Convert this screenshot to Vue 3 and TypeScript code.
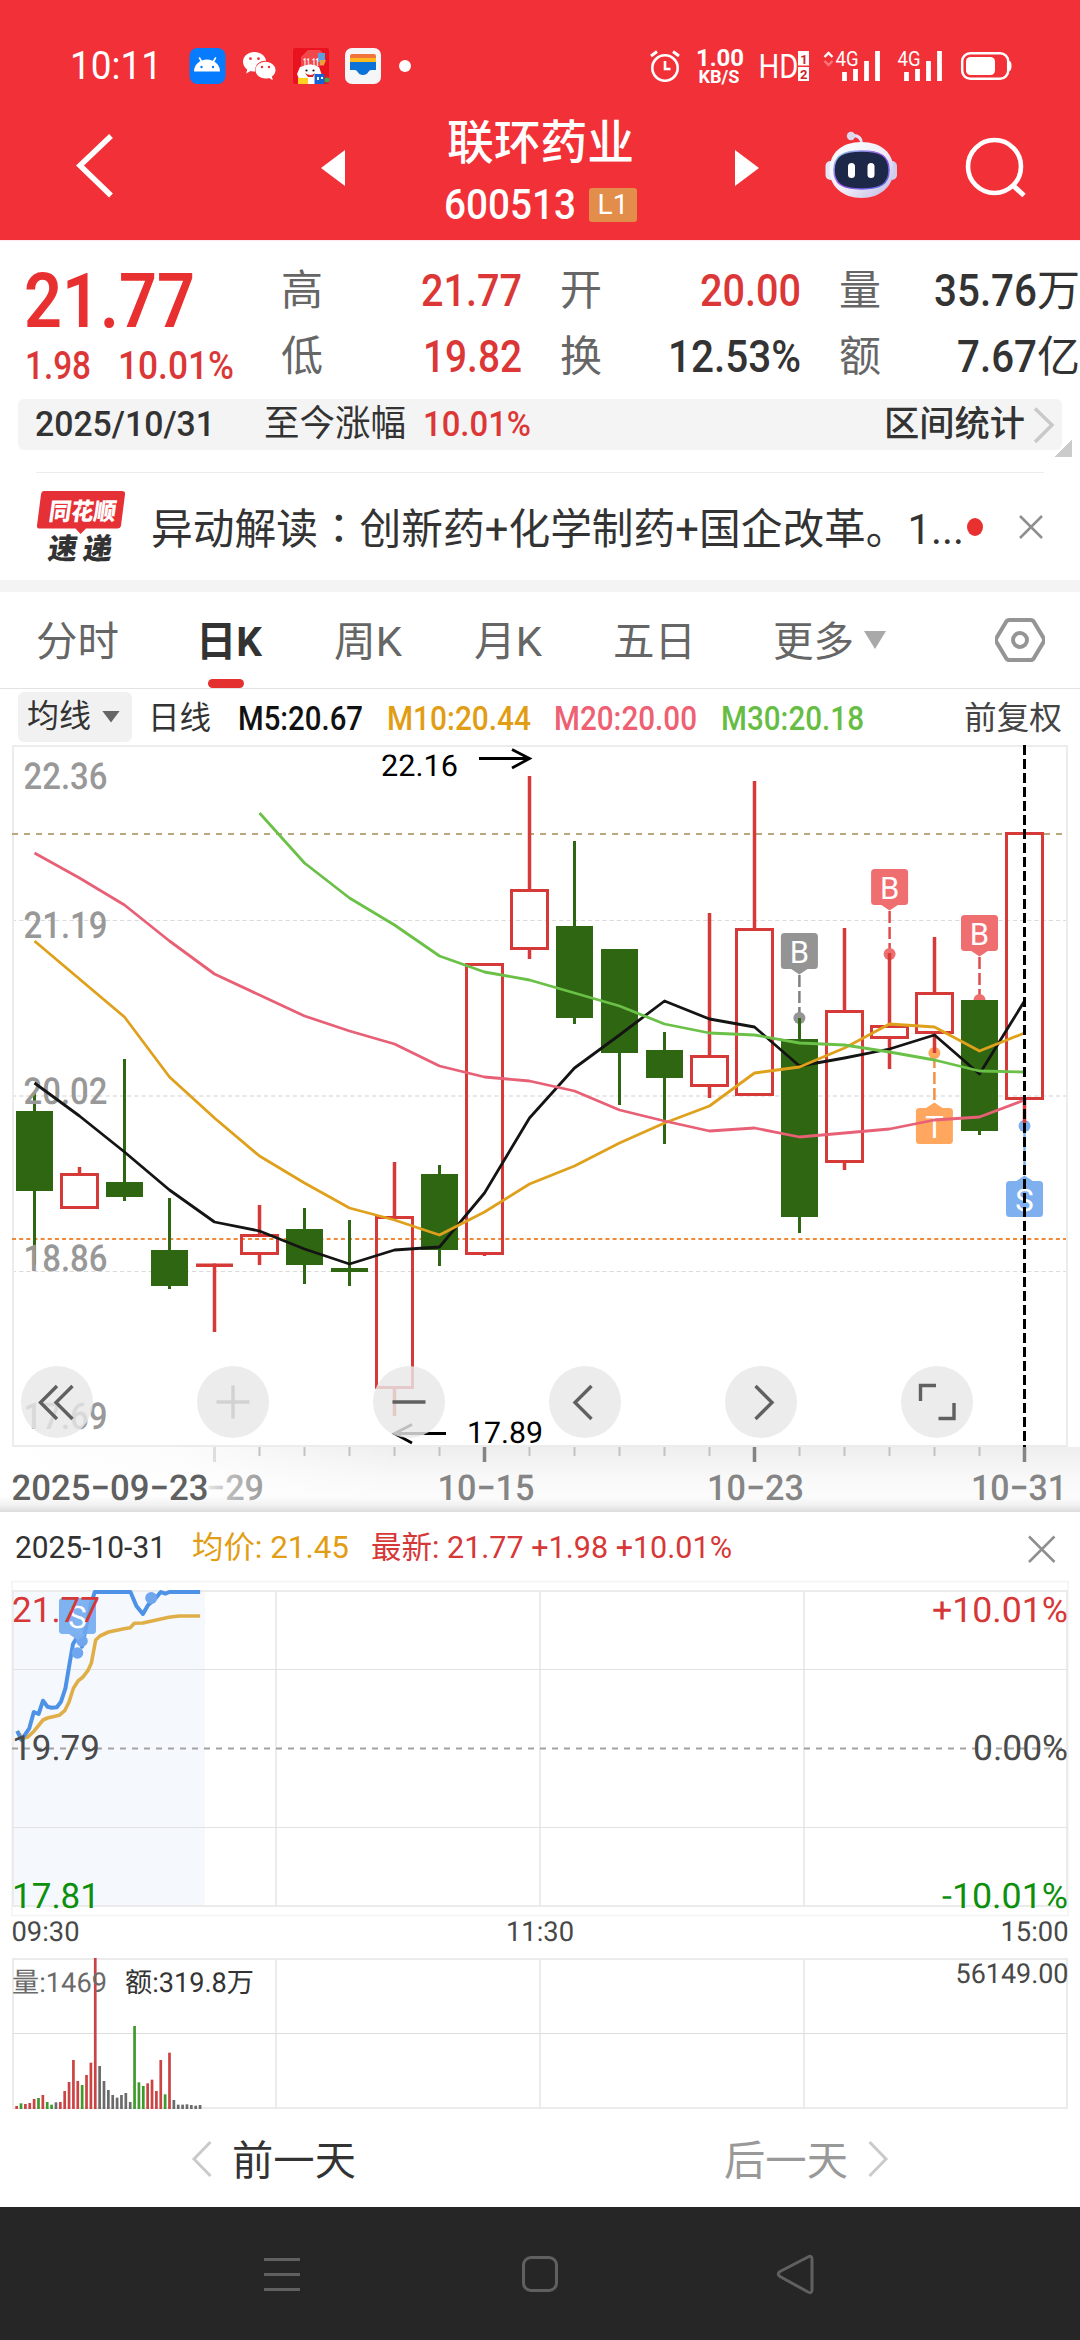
<script setup lang="ts">
import { computed } from 'vue'

type Fitted = HTMLElement

// Condenses or widens a run of text horizontally to a given width in px.
const vFit = {
  mounted(el: Fitted, binding: { value: number }) {
    el.style.display = 'inline-block'
    el.style.whiteSpace = 'pre'
    const natural = el.getBoundingClientRect().width
    el.style.transformOrigin = '0 50%'
    el.style.transform = `scaleX(${binding.value / natural})`
    el.style.marginRight = `${binding.value - natural}px`
  },
}

interface Stat { label: string; value: string; w: number; unit?: string; up?: boolean }
const stats: Stat[][] = [
  [
    { label: '高', value: '21.77', w: 101, up: true },
    { label: '低', value: '19.82', w: 99, up: true },
  ],
  [
    { label: '开', value: '20.00', w: 101, up: true },
    { label: '换', value: '12.53%', w: 133 },
  ],
  [
    { label: '量', value: '35.76', w: 103, unit: '万' },
    { label: '额', value: '7.67', w: 80, unit: '亿' },
  ],
]

const averages = [
  { text: 'M5:20.67', w: 125, left: 27, color: '#111111' },
  { text: 'M10:20.44', w: 144, left: 24, color: '#e19d13' },
  { text: 'M20:20.00', w: 143, left: 23, color: '#ee6072' },
  { text: 'M30:20.18', w: 143, left: 24, color: '#66bd43' },
]

// Each entry: rising flag, body top, body bottom, wick top, wick bottom.
type Candle = [number, number, number, number, number]
const raw: Candle[] = [
  [0, 1111, 1191, 1093, 1265],
  [1, 1173, 1209, 1167, 1209],
  [0, 1182, 1197, 1059, 1201],
  [0, 1250, 1286, 1198, 1289],
  [1, 1263.5, 1266.5, 1265, 1332],
  [1, 1234, 1255, 1205, 1265],
  [0, 1229, 1265, 1208, 1284],
  [0, 1268, 1272, 1220, 1286],
  [1, 1216, 1389, 1162, 1416],
  [0, 1174, 1250, 1165, 1266],
  [1, 963, 1255, 963, 1256],
  [1, 889, 950, 776, 959],
  [0, 926, 1018, 841, 1024],
  [0, 949, 1053, 949, 1105],
  [0, 1050, 1078, 1032, 1144],
  [1, 1055, 1087, 913, 1098],
  [1, 928, 1096, 781, 1096],
  [0, 1039, 1217, 1018, 1233],
  [1, 1010, 1163, 928, 1170],
  [1, 1025, 1039, 953, 1069],
  [1, 992, 1034, 937, 1053],
  [0, 1000, 1131, 1000, 1135],
  [1, 832, 1100, 832, 1123],
]
const cx = (i: number) => 34.5 + 45 * i
const candles = raw.map(([up, top, bottom, high, low], i) => ({
  x: cx(i), up: up === 1, top, bottom, high, low, flat: bottom - top < 6,
}))

const line = (ys: number[], start = 0) => ys.map((y, i) => `${cx(i + start)},${y}`).join(' ')
const maLines = computed(() => [
  { color: '#141414', points: line([1083, 1116, 1152, 1190, 1222, 1231, 1249, 1264, 1250, 1247, 1193, 1118, 1068, 1035, 1001, 1019, 1027, 1066, 1058, 1049, 1035, 1074, 1001]) },
  { color: '#dfa01c', points: line([941, 979, 1017, 1077, 1118, 1156, 1183, 1208, 1220, 1235, 1212, 1184, 1166, 1143, 1123, 1106, 1073, 1067, 1048, 1024, 1027, 1051, 1033]) },
  { color: '#e86076', points: line([853, 878, 905, 941, 974, 995, 1016, 1031, 1044, 1066, 1077, 1081, 1091, 1110, 1121, 1131, 1128, 1137, 1133, 1129, 1120, 1117, 1100]) },
  { color: '#6bc048', points: line([813, 863, 898, 925, 956, 972, 980, 993, 1006, 1024, 1033, 1035, 1043, 1045, 1052, 1060, 1071, 1072], 5) },
])

const scale = [
  { text: '22.36', y: 788.5 },
  { text: '21.19', y: 938 },
  { text: '20.02', y: 1104 },
  { text: '18.86', y: 1271 },
  { text: '17.69', y: 1429 },
]

const marks = [
  { t: 'B', x: 799.4, box: 933, dot: 1018, color: '#949494', dash: '#808080' },
  { t: 'B', x: 889.6, box: 869, dot: 954, color: '#ef6e6f', dash: '#e04a4c' },
  { t: 'B', x: 979.5, box: 915, dot: 1000, color: '#ef6e6f', dash: '#e04a4c' },
  { t: 'T', x: 934.4, box: 1108, dot: 1053, color: '#ffa65f', dash: '#f09246', below: true },
  { t: 'S', x: 1024.5, box: 1181, dot: 1126, color: '#7eb0f0', dash: '#7eb0f0', below: true },
]

const ticks = Array.from({ length: 18 }, (_, k) => k + 5).filter((i) => (i - 4) % 6 !== 0)

const hs = 540 / 1568
const curve = (pts: number[][]) => pts.map(([x, y]) => `${(x * hs).toFixed(1)},${(1510 + y / 3).toFixed(1)}`).join(' ')
const price = curve([[50, 663], [62, 690], [85, 655], [98, 606], [112, 612], [125, 572], [138, 590], [150, 593], [165, 592], [177, 575], [190, 535], [202, 460], [212, 402], [222, 385], [232, 382], [238, 410], [252, 340], [265, 280], [275, 246], [379, 246], [396, 288], [415, 312], [430, 285], [450, 267], [467, 246], [480, 251], [492, 246], [581, 246]])
const average = curve([[50, 663], [65, 685], [80, 682], [100, 662], [125, 630], [138, 624], [172, 616], [188, 602], [200, 577], [213, 535], [227, 512], [240, 502], [255, 482], [265, 460], [278, 390], [290, 378], [315, 366], [360, 356], [378, 353], [390, 340], [415, 339], [490, 322], [520, 318], [581, 318]])

const tones: Record<string, string> = { r: '#cb4343', g: '#3f9a2d', k: '#6b6b6b' }
const volumes = 'r498 g490 r492 r489 r477 g474 r465 g486 g494 k487 r486 r453 r426 r360 r423 g435 r405 r368 r54 k378 k423 k450 k465 k473 k465 k459 k486 g258 g427 g438 r430 r419 r453 r360 g463 r338 k480 k494 k494 k493 k495 k497 k495'
  .split(' ')
  .map((s, i) => ({ x: 15.3 + i * 4.367, y: 1940 + Number(s.slice(1)) / 3, color: tones[s[0]] }))
</script>

<template>
  <div class="screen">
    <header class="top">
      <div class="status">
        <span class="clock"><span v-fit="92">10:11</span></span>
        <svg class="tray" width="230" height="44" viewBox="186 44 230 44">
          <rect x="189.500" y="48" width="36" height="36" rx="8" fill="#067bfd" />
          <path d="M194 71.500a13 12 0 0 1 26 0z" fill="#fff" />
          <path d="M199.500 58l3 5M215.500 58l-3 5" stroke="#fff" stroke-width="1.600" stroke-linecap="round" />
          <circle cx="201.500" cy="67" r="1.200" fill="#067bfd" /><circle cx="213" cy="67" r="1.200" fill="#067bfd" />
          <path d="M254.500 52c-6.500 0-11.500 4.300-11.500 9.800 0 3.200 1.600 5.800 4.200 7.700l-1 4 4.400-2.400c1.500.4 2.700.5 4.500.5a9.500 9.500 0 0 1 11-10.600c-.8-5.300-5.600-9-11.600-9z" fill="#fff" />
          <path d="M265.500 61.800c-5.600 0-10 3.700-10 8.300s4.400 8.400 10 8.400c1.300 0 2.500-.3 3.600-.6l3.700 2.300-.9-3.600c2.200-1.600 3.600-3.800 3.600-6.500 0-4.600-4.500-8.300-10-8.300z" fill="#fff" />
          <g fill="#f23037"><circle cx="250.500" cy="58.700" r="1.400" /><circle cx="258.500" cy="58.700" r="1.400" /><circle cx="262" cy="67" r="1.200" /><circle cx="269" cy="67" r="1.200" /></g>
          <rect x="293" y="48" width="36" height="36" rx="2" fill="#e8131f" />
          <path d="M301 57l7-7 12 0 4 4v12h-23z" fill="#f2474b" />
          <path d="M318 53h7v9h-7z" fill="#5a9fe0" /><path d="M320 60h6l-2 5h-4z" fill="#e9a13c" />
          <path d="M300 67q11-5 19 0l4 11-3 6h-19l-4-10z" fill="#fff" />
          <path d="M305 73q6 4 10 0l-2 4h-5z" fill="#d3222c" />
          <circle cx="306.500" cy="70.500" r="1.100" fill="#111" /><circle cx="313.500" cy="70.500" r="1.100" fill="#111" />
          <path d="M298 78h10v6h-10z" fill="#ffd21f" /><path d="M314.500 74h10v10h-10z" fill="#1763d3" /><path d="M317 77h2v3h-2zM321 77h2v2h-2z" fill="#fff" /><circle cx="327" cy="80" r="2.500" fill="#35a853" />
          <text x="303" y="66" class="rb tiny" textLength="16" lengthAdjust="spacingAndGlyphs">11.11</text>
          <rect x="345" y="48" width="36" height="36" rx="7" fill="#f5f6f8" />
          <path d="M350 58v-2q0-2 2-2h22q2 0 2 2v2z" fill="#f2743c" />
          <path d="M350 58h26v4h-26z" fill="#fbb91e" />
          <path d="M350 62h26v8h-5q-1.500 0-2.500 1.700-2 3.300-5.500 3.300t-5.500-3.300q-1-1.700-2.500-1.700h-5z" fill="#0b72d8" />
          <circle cx="405" cy="66" r="6" fill="#fff" />
        </svg>
        <svg class="signals" width="372" height="44" viewBox="644 44 372 44">
          <g fill="none" stroke="#fff" stroke-width="2.600">
            <circle cx="665" cy="68" r="12.700" /><path d="M665 61v8h5.500" /><path d="M651 56l6-4.500M679 56l-6-4.500" stroke-width="3" />
          </g>
          <text x="696" y="66" class="rb" font-size="24" textLength="48">1.00</text>
          <text x="698.500" y="83" class="rb" font-size="18.500" textLength="41" lengthAdjust="spacingAndGlyphs">KB/S</text>
          <text x="758.500" y="78" class="rr" font-size="33.500" textLength="40" lengthAdjust="spacingAndGlyphs">HD</text>
          <rect x="798" y="51" width="11" height="14.500" fill="#fff" /><rect x="798" y="67" width="11" height="14" fill="#fff" />
          <text x="800.200" y="63.500" class="chip">1</text><text x="800" y="79" class="chip">2</text>
          <path d="M824.500 57l4-4 4 4" fill="none" stroke="#fff" stroke-width="2.400" /><path d="M824.500 61l4 4 4-4" fill="none" stroke="#f8777b" stroke-width="2.400" />
          <g fill="#fff" class="rr" font-size="21">
            <text x="835.500" y="66" textLength="23" lengthAdjust="spacingAndGlyphs">4G</text>
            <text x="897.500" y="66" textLength="23" lengthAdjust="spacingAndGlyphs">4G</text>
          </g>
          <path d="M844.500 72v9M855.500 69v12M866.500 61v20M877.500 51v30M906.500 72v9M917.500 69v12M928.500 61v20M939.500 51v30" stroke="#fff" stroke-width="4.800" />
          <rect x="962.200" y="53.200" width="46" height="25.600" rx="8" fill="none" stroke="#fff" stroke-width="2.500" />
          <rect x="966" y="57" width="29" height="18" rx="4.500" fill="#fff" /><path d="M1009 61q2.500 0 2.500 5t-2.500 5z" fill="#fff" />
        </svg>
      </div>
      <div class="titlebar">
        <svg class="i-back" width="50" height="80" viewBox="70 128 50 80"><path d="M111 136L80 165.500l31 30" fill="none" stroke="#fff" stroke-width="5.500" /></svg>
        <svg class="i-prev" width="30" height="80" viewBox="318 128 30 80"><path d="M345 150v36l-24-18z" fill="#fff" /></svg>
        <div class="title">
          <div class="name"><span v-fit="187">联环药业</span></div>
          <div class="code"><span v-fit="132">600513</span><span class="badge">L1</span></div>
        </div>
        <svg class="i-next" width="30" height="80" viewBox="732 128 30 80"><path d="M735 150v36l24-18z" fill="#fff" /></svg>
        <svg class="i-bot" width="80" height="80" viewBox="821 128 80 80">
          <defs>
            <linearGradient id="shell" x1="0" y1="0" x2="1" y2="1"><stop offset="0" stop-color="#fff" /><stop offset=".55" stop-color="#eeecf8" /><stop offset="1" stop-color="#bdb5e2" /></linearGradient>
            <linearGradient id="rim" x1="0" y1="0" x2="1" y2="1"><stop offset="0" stop-color="#8ad3ee" /><stop offset=".5" stop-color="#9a4fe8" /><stop offset="1" stop-color="#4e6be0" /></linearGradient>
          </defs>
          <path d="M853 135.500q8.500 0 8.500 8" fill="none" stroke="#e6e2f5" stroke-width="3" /><circle cx="851" cy="136" r="4.200" fill="#dcd8f0" />
          <rect x="825.500" y="161" width="10" height="19" rx="5" fill="#e4e6f6" /><rect x="887" y="161" width="10" height="19" rx="5" fill="#d0cdee" />
          <path d="M861.500 142c20 0 32 11 32 28 0 16-13 28-32 28s-32-12-32-28c0-17 12-28 32-28z" fill="url(#shell)" />
          <path d="M861.500 151c19 0 27.500 5 27.500 19s-8.500 19-27.500 19-27.500-5-27.500-19 8.500-19 27.500-19z" fill="#1d2848" stroke="url(#rim)" stroke-width="1.500" />
          <rect x="848" y="163" width="7" height="15" rx="3.500" fill="#fff" /><rect x="867.500" y="163" width="7" height="15" rx="3.500" fill="#fff" />
        </svg>
        <svg class="i-find" width="70" height="80" viewBox="962 128 70 80"><circle cx="994.500" cy="166.500" r="26.500" fill="none" stroke="#fff" stroke-width="4.600" /><path d="M1013 185.500l11 10" stroke="#fff" stroke-width="5" /></svg>
      </div>
    </header>

    <section class="quote">
      <div class="last">
        <div class="price"><span v-fit="171">21.77</span></div>
        <div class="delta"><span v-fit="66">1.98</span><span v-fit="116" class="pct">10.01%</span></div>
      </div>
      <div v-for="(col, c) in stats" :key="c" class="col">
        <div v-for="s in col" :key="s.label" class="stat">
          <span class="lab">{{ s.label }}</span>
          <span class="val" :class="{ up: s.up, unit: s.unit }"><span v-fit="s.w">{{ s.value }}</span><i v-if="s.unit">{{ s.unit }}</i></span>
        </div>
      </div>
    </section>

    <section class="range">
      <span v-fit="180" class="day">2025/10/31</span>
      <span v-fit="142" class="since">至今涨幅</span>
      <span v-fit="108" class="gain">10.01%</span>
      <span v-fit="141" class="interval">区间统计</span>
      <svg class="go" width="24" height="40" viewBox="1032 405 24 40"><path d="M1035 408.500L1052 425l-17 17" fill="none" stroke="#c9c9c9" stroke-width="3.500" /></svg>
      <i class="fold"></i>
    </section>

    <section class="news">
      <svg width="92" height="78" viewBox="35 488 92 78">
        <path d="M44 490h78q3.500 0 3 3.500l-4 31q-.5 3-3.500 3H86l-5.500 5.500-5-5.500H40q-3.500 0-3-3l4-31q.5-3.500 3-3.500z" fill="#e53035" />
        <text x="48" y="519" class="brand" transform="skewX(-8)" transform-origin="48 519" textLength="67" lengthAdjust="spacingAndGlyphs">同花顺</text>
        <text x="47" y="558.500" class="brand dark" transform="skewX(-8)" transform-origin="47 558" textLength="64">速递</text>
      </svg>
      <p class="headline"><span v-fit="813">异动解读<b>：</b>创新药+化学制药+国企改革。1...</span></p>
      <i class="dot"></i>
      <svg class="shut" width="26" height="26" viewBox="1019 513 26 26"><path d="M1021 515l22 22M1043 515l-22 22" stroke="#8f8f8f" stroke-width="2.500" /></svg>
    </section>

    <nav class="tabs">
      <span v-fit="83" class="t1">分时</span>
      <span class="t2 on"><span v-fit="66">日K</span></span>
      <span v-fit="68" class="t3">周K</span>
      <span v-fit="68" class="t4">月K</span>
      <span v-fit="83" class="t5">五日</span>
      <span v-fit="81" class="t6">更多</span>
      <i class="caret"></i>
      <svg class="gear" width="50" height="50" viewBox="995 615 50 50"><path d="M1009.500 620h21q2.500 0 3.500 2l9.500 16q1 2 0 4l-9.500 16q-1 2-3.500 2h-21q-2.500 0-3.500-2l-9.500-16q-1-2 0-4l9.500-16q1-2 3.500-2z" fill="none" stroke="#959595" stroke-width="4" /><circle cx="1020" cy="640" r="7" fill="none" stroke="#959595" stroke-width="4" /></svg>
    </nav>

    <div class="legend">
      <span class="pick"><span v-fit="64">均线</span><i></i></span>
      <span v-fit="63" class="period">日线</span>
      <span v-for="a in averages" :key="a.text" class="ma" :style="{ color: a.color, marginLeft: a.left + 'px' }"><span v-fit="a.w">{{ a.text }}</span></span>
      <span v-fit="98" class="adjust">前复权</span>
    </div>

    <svg class="chart" width="1080" height="768" viewBox="0 744 1080 768">
      <defs>
        <linearGradient id="band" x1="0" y1="0" x2="0" y2="1"><stop offset="0" stop-color="#eeeeee" /><stop offset=".45" stop-color="#f8f8f8" /><stop offset=".78" stop-color="#fcfcfc" /><stop offset=".9" stop-color="#f0f0f0" /><stop offset="1" stop-color="#dcdcdc" /></linearGradient>
        <linearGradient id="veil"><stop offset="0" stop-color="#fff" /><stop offset=".45" stop-color="#fff" stop-opacity=".8" /><stop offset="1" stop-color="#fff" stop-opacity="0" /></linearGradient>
        <linearGradient id="fade" gradientUnits="userSpaceOnUse" x1="206" x2="264" y1="0" y2="0"><stop offset="0" stop-color="#ebebeb" /><stop offset=".4" stop-color="#bcbcbc" /><stop offset="1" stop-color="#9c9c9c" /></linearGradient>
      </defs>
      <g stroke="#dadada" fill="none">
        <path d="M12 920.500H1066M12 1271.500H1066" stroke-width="1" stroke-dasharray="4.200 3" />
        <path d="M12 1096H1066" stroke="#e8e8e8" stroke-width="2" stroke-dasharray="4.200 3" />
      </g>
      <rect x="13" y="746" width="1054" height="700" fill="none" stroke="#ececec" stroke-width="2" />
      <path d="M12 834H1064" stroke="#bba77c" stroke-width="2" stroke-dasharray="6 6" />
      <path d="M12 1239H1066" stroke="#f08a38" stroke-width="2" stroke-dasharray="4 3.150" />

      <g v-for="m in marks" :key="m.x">
        <line :x1="m.x" :x2="m.x" :y1="m.below ? m.box - 8 : m.box + 42" :y2="m.below ? m.dot + 5 : m.dot - 5" :stroke="m.dash" stroke-width="2.500" stroke-dasharray="12 4" />
        <circle :cx="m.x" :cy="m.dot" r="6" :fill="m.color" />
        <path v-if="m.below" :d="`M${m.x - 9} ${m.box + 0.5}l9 -6 9 6z`" :fill="m.color" />
        <path v-else :d="`M${m.x - 9} ${m.box + 35.500}l9 6 9 -6z`" :fill="m.color" />
        <rect :x="m.x - 18.5" :y="m.box" width="37" height="36" rx="3.500" :fill="m.color" />
        <text :x="m.x" :y="m.box + 29.500" class="rr" font-size="31" fill="#fff" text-anchor="middle">{{ m.t }}</text>
      </g>

      <g v-for="c in candles" :key="c.x">
        <template v-if="c.up">
          <path :d="`M${c.x} ${c.high}V${c.top}M${c.x} ${c.bottom}V${c.low}`" stroke="#d63a38" stroke-width="3.500" />
          <rect v-if="c.flat" :x="c.x - 18.500" :y="c.top" width="37" height="3.500" fill="#d63a38" />
          <rect v-else :x="c.x - 18" :y="c.top + 1.500" width="36" :height="c.bottom - c.top - 3" fill="none" stroke="#d63a38" stroke-width="3" />
        </template>
        <template v-else>
          <path :d="`M${c.x} ${c.high}V${c.low}`" stroke="#2f6612" stroke-width="3" />
          <rect :x="c.x - 18.500" :y="c.top" width="37" :height="c.bottom - c.top" fill="#2f6612" />
        </template>
      </g>

      <g class="din" font-size="37" fill="#989898">
        <text v-for="s in scale" :key="s.text" x="23.500" :y="s.y" textLength="84" lengthAdjust="spacingAndGlyphs">{{ s.text }}</text>
      </g>
      <polyline v-for="l in maLines" :key="l.color" :points="l.points" fill="none" :stroke="l.color" stroke-width="2.800" stroke-linejoin="round" />

      <g fill="#000" class="rr" font-size="30">
        <text x="381" y="776" textLength="77" lengthAdjust="spacingAndGlyphs">22.16</text>
        <text x="467" y="1443" textLength="76" lengthAdjust="spacingAndGlyphs">17.89</text>
      </g>
      <path d="M479 758.500H529M512 749.500l17.500 9L512 768M446 1433.500H395M412 1424.500l-17.500 9 17.500 9.500" fill="none" stroke="#000" stroke-width="2.800" />
      <path d="M1024.500 745V1447" stroke="#000" stroke-width="3" stroke-dasharray="10 4" />

      <g fill="#e8e8e8" fill-opacity=".82">
        <circle v-for="x in [57, 233, 409, 585, 761, 937]" :key="x" :cx="x" cy="1402" r="36" />
      </g>
      <g fill="none" stroke="#606060" stroke-width="3.400">
        <path d="M57 1386l-16.500 16.500L57 1419M72.500 1386L56 1402.500l16.500 16.500" />
        <path d="M233 1385.500v33M216.500 1402h33" stroke="#d2d2d2" />
        <path d="M392.500 1402h33" />
        <path d="M591.500 1386L575 1402.500l16.500 16.500M755.500 1386l16.500 16.500-16.500 16.500" />
        <path d="M920.500 1401v-15.500H936M954 1403v15.500h-15.500" />
      </g>

      <rect x="0" y="1447" width="1080" height="65" fill="url(#band)" />
      <rect x="0" y="1447" width="400" height="50" fill="url(#veil)" />
      <path :d="ticks.map((i) => `M${cx(i)} 1447V1456`).join('')" stroke="#c2c2c2" stroke-width="2" />
      <path d="M214.500 1447V1462" stroke="#dedede" stroke-width="3" />
      <path d="M484.500 1447V1462M754.500 1447V1462M1024.500 1447V1462" stroke="#848484" stroke-width="3.500" />
      <g class="axis" font-size="35.500" fill="#858585">
        <text x="11.500" y="1500" fill="#606060" textLength="197" lengthAdjust="spacingAndGlyphs">2025−09−23</text>
        <text x="206" y="1500" fill="url(#fade)" textLength="58" lengthAdjust="spacingAndGlyphs">−29</text>
        <text x="437.500" y="1500" textLength="97" lengthAdjust="spacingAndGlyphs">10−15</text>
        <text x="707" y="1500" textLength="97" lengthAdjust="spacingAndGlyphs">10−23</text>
        <text x="971" y="1500" textLength="96" lengthAdjust="spacingAndGlyphs">10−31</text>
      </g>
    </svg>

    <div class="dayhead">
      <span v-fit="151" class="d1">2025-10-31</span>
      <span class="d2"><span v-fit="157">均价: 21.45</span></span>
      <span class="d3"><span v-fit="361">最新: 21.77 +1.98 +10.01%</span></span>
      <svg width="30" height="30" viewBox="1026 1532 30 30"><path d="M1029 1534.500l25.500 25.500M1054.500 1534.500L1029 1560" stroke="#8f8f8f" stroke-width="2.500" /></svg>
    </div>

    <svg class="chart" width="1080" height="542" viewBox="0 1578 1080 542">
      <rect x="12" y="1591" width="193" height="315" fill="#f5f9fe" />
      <rect x="12" y="1581.500" width="1056" height="334" fill="none" stroke="#f4f4f4" stroke-width="1.500" />
      <g fill="none" stroke="#ebebeb" stroke-width="2">
        <rect x="13" y="1591" width="1054" height="315" /><path d="M276 1591V1906M540 1591V1906M804 1591V1906" />
        <path d="M13 1669.500H1067M13 1827.500H1067" stroke="#e2e2e2" stroke-width="1.200" />
        <rect x="13" y="1959" width="1054" height="149" /><path d="M276 1959V2108M540 1959V2108M804 1959V2108" />
        <path d="M13 2033.500H1067" stroke="#dedede" stroke-width="1.200" />
      </g>
      <path d="M12 1748.500H1066" stroke="#a2a2a2" stroke-width="1.800" stroke-dasharray="6 6" />
      <polyline :points="average" fill="none" stroke="#e0ae46" stroke-width="3.600" stroke-linejoin="round" />
      <polyline :points="price" fill="none" stroke="#4e92e8" stroke-width="4" stroke-linejoin="round" />
      <g fill="#6fa6ee"><circle cx="151.200" cy="1598" r="6" /><circle cx="77.500" cy="1653" r="5.800" /><circle cx="82" cy="1641" r="5.800" /></g>
      <path d="M69 1634h18l-9.500 6z" fill="#7eb0f0" /><rect x="59" y="1598" width="37" height="36" rx="3.500" fill="#6ea7ef" fill-opacity=".88" />
      <text x="77.500" y="1627.500" class="rr" font-size="31" fill="#fff" text-anchor="middle">S</text>
      <g class="rr" font-size="35">
        <g fill="#d63838"><text x="12" y="1622" textLength="88" lengthAdjust="spacingAndGlyphs">21.77</text><text x="1068" y="1622" text-anchor="end" textLength="136" lengthAdjust="spacingAndGlyphs">+10.01%</text></g>
        <g fill="#4a4a4a"><text x="12" y="1759.500" textLength="88" lengthAdjust="spacingAndGlyphs">19.79</text><text x="1068" y="1759.500" text-anchor="end" textLength="95" lengthAdjust="spacingAndGlyphs">0.00%</text></g>
        <g fill="#0e900e"><text x="12" y="1907.500" textLength="88" lengthAdjust="spacingAndGlyphs">17.81</text><text x="1068" y="1907.500" text-anchor="end" textLength="126" lengthAdjust="spacingAndGlyphs">-10.01%</text></g>
      </g>
      <g class="rr" font-size="27.500" fill="#484848">
        <text x="11.500" y="1940.500" textLength="68" lengthAdjust="spacingAndGlyphs">09:30</text>
        <text x="540" y="1940.500" text-anchor="middle" textLength="68" lengthAdjust="spacingAndGlyphs">11:30</text>
        <text x="1068.500" y="1940.500" text-anchor="end" textLength="68" lengthAdjust="spacingAndGlyphs">15:00</text>
        <text x="1068.500" y="1983" text-anchor="end" textLength="113" lengthAdjust="spacingAndGlyphs">56149.00</text>
        <rect v-for="v in volumes" :key="v.x" :x="v.x" :y="v.y" width="2.700" :height="2109 - v.y" :fill="v.color" />
        <text x="12" y="1992" fill="#6a6a6a" textLength="95" lengthAdjust="spacingAndGlyphs">量:1469</text>
        <text x="125" y="1992" fill="#333" textLength="129" lengthAdjust="spacingAndGlyphs">额:319.8万</text>
      </g>
    </svg>

    <div class="pager">
      <svg width="28" height="40" viewBox="188 2139 28 40"><path d="M210.500 2142L194 2159l16.500 17" fill="none" stroke="#cacaca" stroke-width="3" /></svg>
      <span v-fit="124" class="before">前一天</span>
      <span v-fit="124" class="after">后一天</span>
      <svg width="28" height="40" viewBox="864 2139 28 40"><path d="M869.500 2142l16.500 17-16.500 17" fill="none" stroke="#cacaca" stroke-width="3" /></svg>
    </div>

    <footer class="keys">
      <svg width="1080" height="133" viewBox="0 2207 1080 133" fill="none" stroke="#606060" stroke-width="3">
        <path d="M264 2259.500h36M264 2274.500h36M264 2289.500h36" />
        <rect x="523.500" y="2257.500" width="33" height="33" rx="7.500" />
        <path d="M780 2271.500l28-14.500q4-2 4 2v31q0 4-4 2l-28-15.500q-3.500-2.500 0-5z" />
      </svg>
    </footer>
  </div>
</template>

<style>
body { background: #fff; }
</style>

<style scoped>
.screen { width: 1080px; height: 2340px; overflow: hidden; display: flex; flex-direction: column; background: #fff; color: #333; font-family: Roboto, "Noto Sans CJK SC", sans-serif; }
svg { display: block; flex: none; }
i { font-style: normal; }
.rb { font-family: Roboto, sans-serif; font-weight: 700; fill: #fff; }
.rr { font-family: Roboto, "Noto Sans CJK SC", sans-serif; }
text.rr:not([fill]) { fill: inherit; }
.signals > text.rr { fill: #fff; }
.tiny { font-size: 11px; }
.chip { font: 700 13px Roboto, sans-serif; fill: #c9262c; }
.din { font-family: Roboto, sans-serif; font-weight: 500; }
.axis { font-family: Roboto, sans-serif; font-weight: 500; }

.top { height: 240px; flex: none; background: #f23037; color: #fff; }
.status { display: flex; align-items: flex-start; height: 104px; padding-left: 70px; }
.clock { width: 116px; font-size: 38px; line-height: 132px; }
.tray, .signals { margin-top: 44px; }
.signals { margin-left: 228px; }
.titlebar { display: flex; align-items: flex-start; height: 136px; }
.titlebar svg { margin-top: 24px; }
.i-back { margin-left: 70px; }
.i-prev { margin-left: 198px; }
.title { width: 290px; margin-left: 94px; white-space: nowrap; }
.name { height: 76px; line-height: 78px; padding-left: 5px; font-size: 47px; font-weight: 500; }
.code { display: flex; align-items: center; height: 50px; line-height: 50px; padding-left: 2px; font-size: 42px; font-weight: 500; }
.badge { width: 48px; height: 34px; margin-left: 13px; line-height: 34px; text-align: center; font-size: 28px; font-weight: 400; background: #e28e4a; border-radius: 3px; }
.i-bot { margin-left: 59px; }
.i-find { margin-left: 61px; }

.quote { display: flex; flex: none; height: 159px; padding: 16px 0 0 24px; box-sizing: border-box; border-top: 1px solid #fdeaf0; color: #333; }
.last { flex: none; width: 257px; color: #e93030; white-space: nowrap; }
.price { height: 88px; line-height: 88px; font-size: 76px; font-weight: 600; }
.delta { height: 42px; line-height: 42px; padding-left: 1px; font-size: 39px; font-weight: 500; color: #dc3737; }
.pct { margin-left: 27px; }
.col { width: 240px; margin-right: 39px; flex: none; }
.stat { display: flex; justify-content: space-between; height: 66px; line-height: 68px; }
.lab { font-size: 42px; color: #666; }
.val { font-size: 45px; font-weight: 500; white-space: nowrap; margin-right: -1px; }
.val.up { color: #dc3737; }
.val i { font-size: 43px; font-weight: 400; }

.range { position: relative; display: flex; align-items: center; flex: none; width: 1044px; height: 51px; margin-left: 18px; padding-left: 17px; box-sizing: border-box; border-radius: 6px; background: #f4f4f4; font-size: 35px; line-height: 51px; }
.day, .gain { font-weight: 500; }
.since { margin-left: 49px; font-size: 36px; }
.gain { margin-left: 17px; color: #dc3737; }
.interval { margin-left: 353px; font-weight: 500; line-height: 55px; }
.go { margin-left: 7px; }
.fold { position: absolute; right: -10px; bottom: -7px; width: 18px; height: 18px; background: linear-gradient(135deg, transparent 50%, #cbcbcb 50%); }

.news { display: flex; align-items: center; height: 107px; margin: 22px 36px 0 36px; border-top: 1px solid #ececec; flex: none; }
.news > svg:first-child { margin: 2px 0 0 -1px; }
.brand { font: 900 24px "Noto Sans CJK SC", sans-serif; fill: #fff; }
.brand.dark { font-size: 29px; fill: #333; }
.headline { margin: 3px 0 0 24px; font-size: 42px; line-height: 60px; white-space: nowrap; }
.headline b { font-family: "Noto Sans CJK TC", sans-serif; font-weight: 400; }
.dot { width: 18px; height: 18px; margin-left: 3px; border-radius: 50%; background: #e93030; }
.shut { margin-left: 35px; }

.tabs { display: flex; align-items: center; flex: none; height: 109px; box-sizing: border-box; border-top: 12px solid #f4f4f4; border-bottom: 1px solid #e3e3e3; padding-left: 36px; font-size: 41px; line-height: 96px; color: #666; }
.tabs > span:not(.on), .tabs .on > span { position: relative; top: 2px; }
.tabs .on { position: relative; font-weight: 700; color: #333; margin-left: 77px; }
.tabs .on::after { content: ""; position: absolute; left: 12px; bottom: 0; width: 36px; height: 9px; border-radius: 5px; background: #e53030; }
.t3 { margin-left: 72px; }
.t4 { margin-left: 72px; }
.t5 { margin-left: 71px; }
.t6 { margin-left: 77px; }
.caret { width: 22px; height: 18px; margin-left: 10px; background: #a9a9a9; clip-path: polygon(0 0, 100% 0, 50% 100%); }
.gear { margin-left: 109px; }

.legend { display: flex; align-items: center; flex: none; height: 55px; padding-left: 18px; line-height: 55px; font-size: 32px; }
.pick { display: flex; align-items: center; width: 114px; height: 50px; padding-left: 9px; box-sizing: border-box; border-radius: 6px; background: #f1f1f1; }
.pick i { width: 18px; height: 12px; margin-left: 11px; background: #666; clip-path: polygon(0 0, 100% 0, 50% 100%); }
.period, .adjust { padding-top: 3px; }
.period { margin-left: 16px; }
.ma { padding-top: 3px; font-size: 34px; font-weight: 500; white-space: nowrap; }
.adjust { margin-left: 100px; color: #444; }
.chart { text-rendering: geometricPrecision; }

.dayhead { display: flex; align-items: center; flex: none; height: 66px; padding: 6px 0 0 15px; box-sizing: border-box; line-height: 40px; font-size: 31px; }
.d2 { margin-left: 26px; color: #e19d13; }
.d3 { margin-left: 22px; color: #d63838; }
.d2, .d3 { white-space: nowrap; }
.dayhead svg { margin-left: 294px; margin-top: 2px; }

.pager { display: flex; align-items: center; flex: none; height: 87px; padding: 0 0 9px 188px; box-sizing: border-box; font-size: 41px; line-height: 60px; }
.before, .after { padding-top: 3px; }
.before { margin-left: 16px; }
.after { margin-left: 368px; color: #999; }
.pager svg:last-child { margin-left: 16px; }
.keys { flex: none; height: 133px; background: #262626; }
</style>
